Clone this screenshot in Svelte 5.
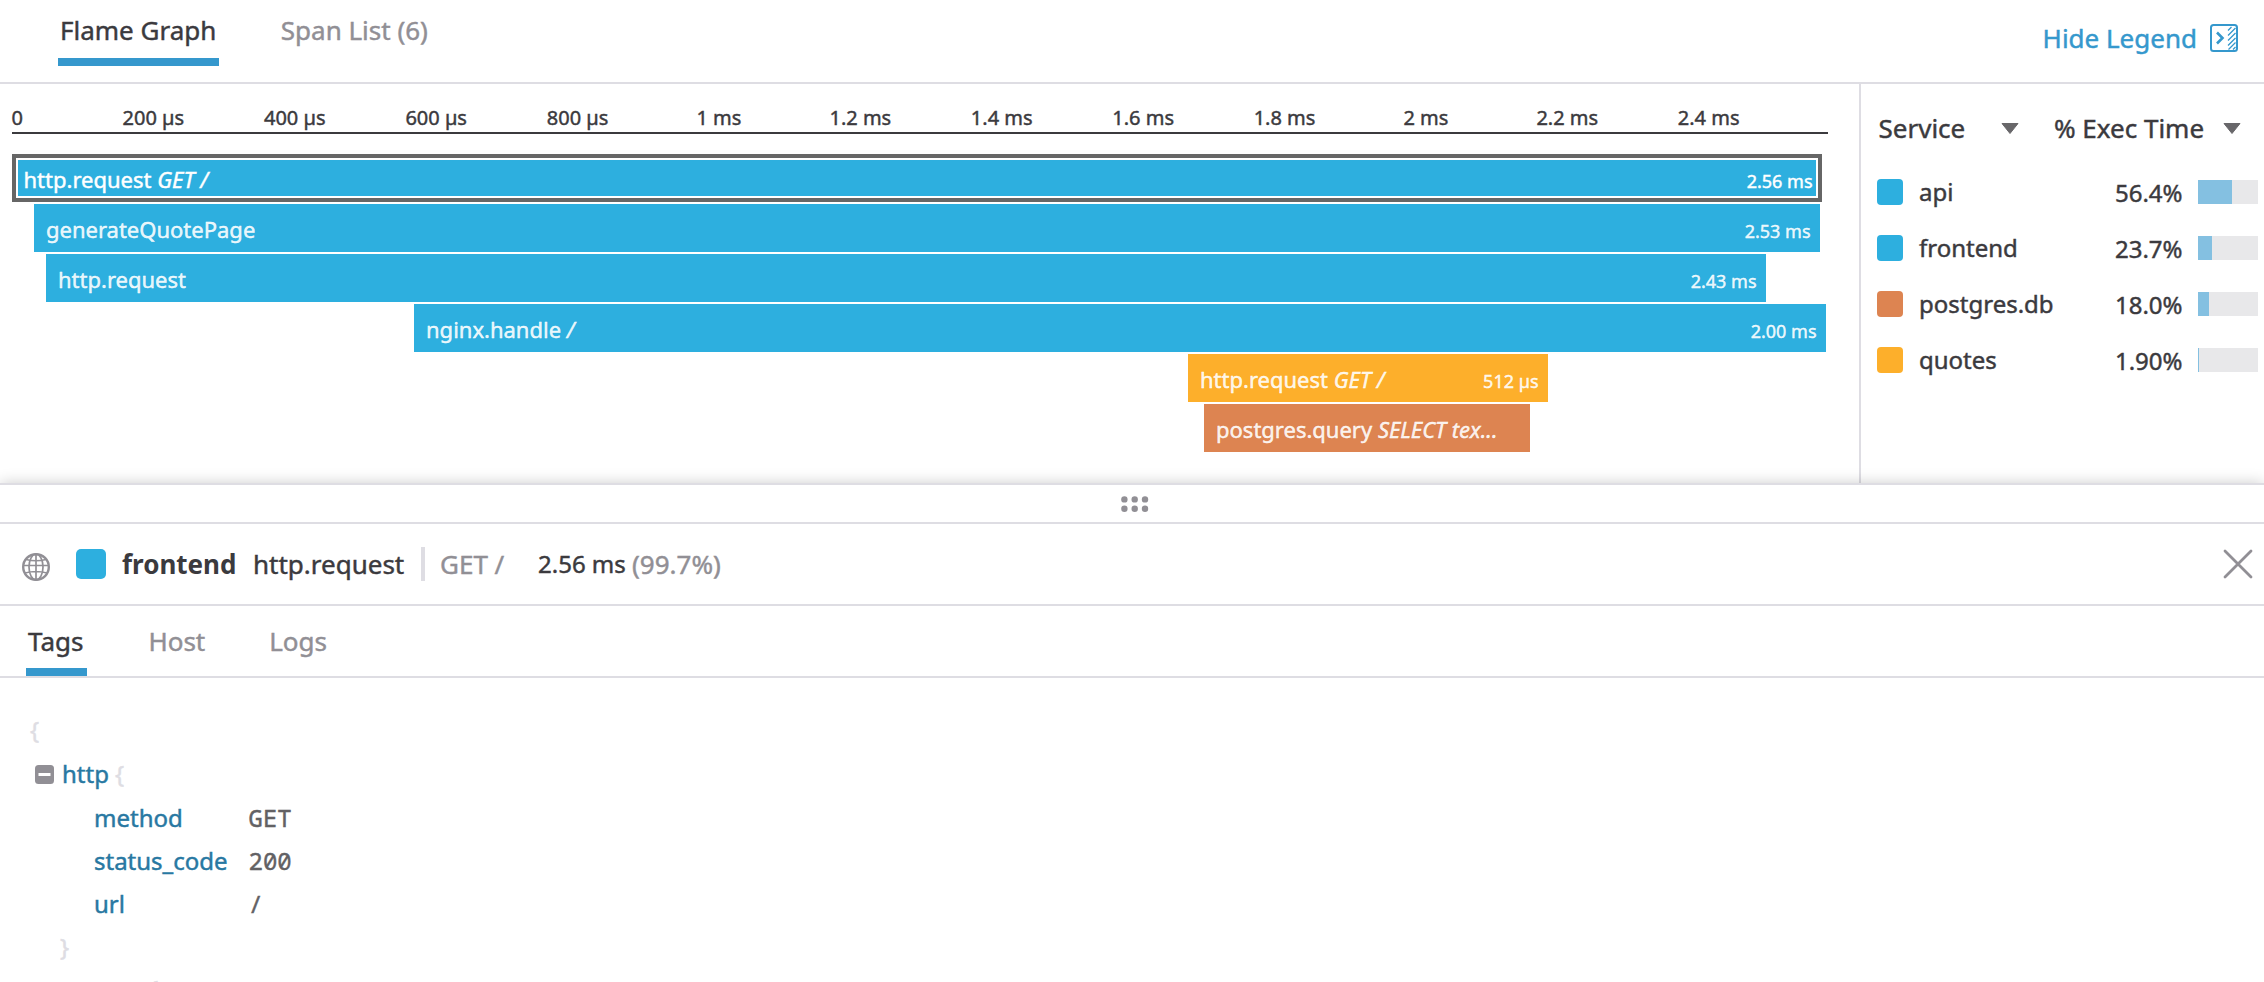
<script>
  const SCALE_START = 12;
  const ticks = ['200 µs', '400 µs', '600 µs', '800 µs', '1 ms', '1.2 ms', '1.4 ms', '1.6 ms', '1.8 ms', '2 ms', '2.2 ms', '2.4 ms'];
  const spans = [
    { name: 'http.request', resource: 'GET /', time: '2.56 ms', start: 12, end: 1822, color: '#2dafdf', selected: true },
    { name: 'generateQuotePage', resource: '', time: '2.53 ms', start: 34, end: 1820, color: '#2dafdf' },
    { name: 'http.request', resource: '', time: '2.43 ms', start: 46, end: 1766, color: '#2dafdf' },
    { name: 'nginx.handle', resource: '/', time: '2.00 ms', start: 414, end: 1826, color: '#2dafdf' },
    { name: 'http.request', resource: 'GET /', time: '512 µs', start: 1188, end: 1548, color: '#fdaf2b' },
    { name: 'postgres.query', resource: 'SELECT tex...', time: '', start: 1204, end: 1530, color: '#dd8451' }
  ];
  const services = [
    { name: 'api', pct: '56.4%', value: 56.4, color: '#2dafdf' },
    { name: 'frontend', pct: '23.7%', value: 23.7, color: '#2dafdf' },
    { name: 'postgres.db', pct: '18.0%', value: 18, color: '#dd8451' },
    { name: 'quotes', pct: '1.90%', value: 1.9, color: '#fdaf2b' }
  ];
  const tags = [['method', 'GET'], ['status_code', '200'], ['url', '/']];
</script>

<div class="page">
  <header>
    <nav class="views">
      <span class="tab active">Flame Graph</span>
      <span class="tab">Span List (6)</span>
    </nav>
    <div class="toggle-legend">
      <span>Hide Legend</span>
      <svg width="28" height="28" viewBox="0 0 28 28" fill="none" stroke="#3598cd">
        <rect x="1" y="1" width="26" height="26" rx="2.500" stroke-width="2" />
        <path d="M7 8.500l5.500 5.500L7 19.500" stroke-width="2.600" />
        <path d="M18 6.500l3.500-3.500M18 11.500l7.500-7.500M18 16.500l7.500-7.500M18 21.500l7.500-7.500M18.500 25.500l7-7M23 25.500l2.500-2.500" stroke-width="1.300" />
      </svg>
    </div>
  </header>

  <main>
    <section class="graph">
      <div class="axis">
        <span class="zero">0</span>
        {#each ticks as tick}<span class="tick">{tick}</span>{/each}
      </div>
      <div class="spans">
        {#each spans as s}
          <div class="span" class:selected={s.selected} style="margin-left:{s.start - SCALE_START}px;width:{s.end - s.start}px;--fill:{s.color}">
            <span class="name">{s.name} <i>{s.resource}</i></span>
            <span class="time">{s.time}</span>
          </div>
        {/each}
      </div>
    </section>

    <aside>
      <div class="legend-head">
        <span class="service">Service</span>
        <svg class="caret" width="18" height="11" viewBox="0 0 18 11"><path d="M1 .5h16L9 10.500z" fill="#68676a" stroke="#68676a" stroke-linejoin="round" /></svg>
        <span class="exec">% Exec Time</span>
        <svg class="caret" width="18" height="11" viewBox="0 0 18 11"><path d="M1 .5h16L9 10.500z" fill="#68676a" stroke="#68676a" stroke-linejoin="round" /></svg>
      </div>
      {#each services as s}
        <div class="legend-row">
          <i class="swatch" style="background:{s.color}"></i>
          <span class="label">{s.name}</span>
          <span class="pct">{s.pct}</span>
          <span class="meter"><b style="width:{s.value}%"></b></span>
        </div>
      {/each}
    </aside>
  </main>

  <section class="panel">
    <div class="grip">
      <svg width="28" height="16" viewBox="0 0 28 16" fill="#918f95">
        {#each [3.4, 13.7, 24] as x}
          {#each [3.4, 12.8] as y}<circle cx={x} cy={y} r="3.200" />{/each}
        {/each}
      </svg>
    </div>

    <div class="detail">
      <svg class="globe" width="28" height="28" viewBox="0 0 28 28" fill="none" stroke="#918f95">
        <circle cx="14" cy="14" r="12.800" stroke-width="2.400" />
        <path d="M14 1v26M1 12.500h26M4 6.500q10 2.500 20 0M3 20q11-3 22 0" stroke-width="1.700" />
        <ellipse cx="14" cy="14" rx="7" ry="13" stroke-width="1.700" />
      </svg>
      <i class="big-swatch"></i>
      <b class="svc">frontend</b>
      <span class="op">http.request</span>
      <i class="sep"></i>
      <span class="res">GET /</span>
      <span class="dur">2.56 ms</span>
      <span class="share">(99.7%)</span>
      <svg class="close" width="30" height="30" viewBox="0 0 30 30" fill="none" stroke="#918f95" stroke-width="2.800" stroke-linecap="round"><path d="M2 2l26 26M28 2L2 28" /></svg>
    </div>

    <nav class="subtabs">
      <span class="sub active">Tags</span>
      <span class="sub">Host</span>
      <span class="sub">Logs</span>
    </nav>

    <div class="tree">
      <div class="line"><span class="brace">{'{'}</span></div>
      <div class="line group">
        <svg width="19" height="19" viewBox="0 0 19 19"><rect width="19" height="19" rx="3.500" fill="#918f95" /><path d="M3.500 9.500h12" stroke="#fff" stroke-width="3" /></svg>
        <span class="key">http</span><span class="brace">{'{'}</span>
      </div>
      {#each tags as [key, value]}
        <div class="line leaf"><span class="key">{key}</span><span class="value">{value}</span></div>
      {/each}
      <div class="line close-brace"><span class="brace">{'}'}</span></div>
      <div class="line next-brace"><span class="brace">{'{'}</span></div>
    </div>
  </section>
</div>

<style>
  :global(body) { margin: 0; overflow: hidden; background: #fff; }
  .page { width: 2264px; height: 982px; overflow: hidden; display: flex; flex-direction: column; font-family: 'Noto Sans', sans-serif; font-size: 26px; line-height: 36px; color: #3b3a3e; background: #fff; white-space: nowrap; -webkit-text-stroke: .45px currentColor; }
  svg { display: block; flex: none; }
  header { height: 82px; flex: none; display: flex; justify-content: space-between; border-bottom: 2px solid #dedde3; }
  .views { display: flex; padding: 12px 0 0 58px; gap: 59.500px; }
  .tab { height: 46px; padding: 0 2px; color: #918f95; }
  .tab.active { padding-right: 3px; color: #3b3a3e; border-bottom: 8px solid #3598cd; }
  .toggle-legend { display: flex; height: 36px; padding: 20px 26px 0 0; gap: 13px; color: #3598cd; }
  .toggle-legend svg { margin-top: 4px; }
  main { display: flex; height: 399px; flex: none; }
  .graph { width: 1847px; padding: 16px 0 0 12px; }
  .axis { width: 1816px; height: 32px; display: flex; border-bottom: 2px solid #3b3a3e; font-size: 20px; line-height: 35px; }
  .zero { width: 70.700px; flex: none; text-indent: -.5px; }
  .tick { width: 141.400px; flex: none; text-align: center; }
  .spans { padding-top: 20px; display: flex; flex-direction: column; gap: 2px; }
  .span { height: 48px; box-sizing: border-box; display: flex; align-items: baseline; justify-content: space-between; padding: 0 9.500px 0 12px; background: var(--fill); color: rgba(255, 255, 255, .9); font-size: 22px; line-height: 50px; }
  .span.selected { border: 4px solid #666; box-shadow: inset 0 0 0 2px #fff; padding: 0 5.500px 0 7.500px; line-height: 42px; color: #fff; }
  .time { font-size: 18px; }
  aside { flex: 1; border-left: 2px solid #dedde3; padding: 26px 6px 0 16px; }
  .legend-head { display: flex; height: 36px; align-items: center; margin-bottom: 18px; }
  .service { box-sizing: border-box; width: 124px; padding-left: 1.500px; }
  .exec { width: 169px; margin-left: 35px; }
  .legend-row { height: 56px; display: flex; align-items: center; font-size: 24px; }
  .swatch { width: 26px; height: 26px; border-radius: 4px; }
  .label { margin-left: 16px; flex: 1; }
  .pct { margin: 1px 15.500px 0 0; }
  .meter { width: 60px; height: 24px; background: #e8e8ea; }
  .meter b { display: block; height: 100%; background: #84c0e1; }
  .panel { position: relative; flex: 1; min-height: 0; background: #fff; border-top: 2px solid #dedde3; box-shadow: 0 0 14px rgba(0, 0, 0, .2); }
  .grip { height: 37px; display: flex; justify-content: center; border-bottom: 2px solid #dedde3; }
  .grip svg { margin-top: 11px; margin-left: 6px; }
  .detail { height: 80px; display: flex; align-items: center; padding: 0 11px 0 22px; border-bottom: 2px solid #dedde3; }
  .globe { margin-top: 6px; }
  .big-swatch { width: 30px; height: 30px; margin: -1px 16px 0 26px; border-radius: 5px; background: #2dafdf; }
  .svc { width: 131px; -webkit-text-stroke: 0; }
  .op { width: 168px; }
  .sep { width: 4px; height: 34px; background: #dedde3; margin-right: 15px; }
  .res { width: 98px; color: #918f95; }
  .dur { width: 94px; font-size: 24px; }
  .share { color: #918f95; flex: 1; }
  .subtabs { height: 70px; display: flex; gap: 59px; padding-left: 26px; border-bottom: 2px solid #dedde3; color: #918f95; }
  .sub { box-sizing: border-box; height: 70px; padding: 17px 2.500px 0; }
  .sub.active { padding: 17px 3.500px 0 2px; color: #3b3a3e; border-bottom: 8px solid #3598cd; }
  .tree { padding-top: 31px; font-size: 24px; }
  .line { height: 43.300px; line-height: 43.300px; display: flex; align-items: center; padding-left: 30px; }
  .line:first-child .brace { margin-top: -2px; }
  .brace { color: #dedde3; }
  .key { color: #2878a2; }
  .group { padding-left: 34.500px; }
  .group svg { margin-top: 1px; }
  .group .key { margin: 0 6px 0 8.500px; }
  .leaf { padding-left: 94px; }
  .leaf .key { width: 154.500px; }
  .value { color: #626164; font-family: 'Noto Sans Mono', 'DejaVu Sans Mono', monospace; }
  .close-brace { padding-left: 60px; }
  .next-brace { padding-left: 149px; height: 40px; line-height: 40px; }
</style>
